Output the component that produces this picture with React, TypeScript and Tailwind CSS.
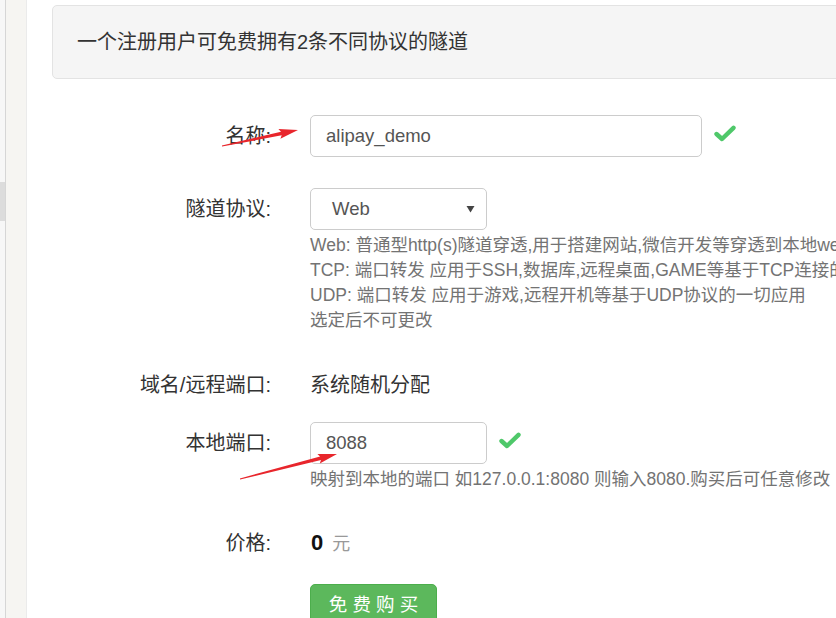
import React from "react";

function Arrow({ x1, y1, x2, y2 }: { x1: number; y1: number; x2: number; y2: number }) {
  const dx = x2 - x1;
  const dy = y2 - y1;
  const len = Math.sqrt(dx * dx + dy * dy);
  const ux = dx / len;
  const uy = dy / len;
  const nx = -uy;
  const ny = ux;
  const headLen = 17;
  const headW = 5;
  const bx = x2 - ux * headLen;
  const by = y2 - uy * headLen;
  const tailW = 0.6;
  const shaftW = 1.8;
  const pts = [
    [x1 + nx * tailW, y1 + ny * tailW],
    [bx + nx * shaftW, by + ny * shaftW],
    [bx + nx * headW - ux * 2, by + ny * headW - uy * 2],
    [x2, y2],
    [bx - nx * headW - ux * 2, by - ny * headW - uy * 2],
    [bx - nx * shaftW, by - ny * shaftW],
    [x1 - nx * tailW, y1 - ny * tailW],
  ]
    .map((p) => p.map((v) => v.toFixed(1)).join(","))
    .join(" ");
  return <polygon points={pts} fill="#e8262c" />;
}

function Check() {
  return (
    <svg width="22" height="17" viewBox="0 0 22 17" className="shrink-0">
      <path d="M2.5 9 L8 14 L19.5 2.8" fill="none" stroke="#4fc86a" strokeWidth="4.4" strokeLinecap="round" strokeLinejoin="round" />
    </svg>
  );
}

export default function App() {
  const font = "font-['Liberation_Sans','Noto_Sans_CJK_SC',sans-serif]";
  return (
    <div className={`relative w-[836px] h-[618px] overflow-hidden bg-white flex ${font}`}>
      {/* left strip */}
      <div className="w-[6px] h-full bg-[#f7f7f7] border-r border-[#d6d6d6] flex flex-col shrink-0">
        <div className="mt-[182px] h-[39px] bg-[#dcdcdc]" />
      </div>
      <div className="w-[21px] h-full bg-[#f6f5f2] border-r border-[#ebebeb] shrink-0" />
      {/* main */}
      <div className="flex-1 pl-[25px] pt-[5px] min-w-0">
        <div className="w-[900px] h-[74px] bg-[#f5f5f5] border border-[#e3e3e3] rounded-[5px] pl-[24px] flex items-center text-[20px] text-[#333] whitespace-nowrap">
          一个注册用户可免费拥有2条不同协议的隧道
        </div>

        {/* 名称 */}
        <div className="mt-[36px] flex items-center h-[42px]">
          <div className="w-[220px] text-right text-[20px] text-[#333] pr-[1px]">名称:</div>
          <div className="ml-[38px] w-[392px] h-[42px] border border-[#cccccc] rounded-[5px] flex items-center pl-[15px] text-[18.5px] text-[#555]">
            alipay_demo
          </div>
          <div className="ml-[12px] mt-[-6px]">
            <Check />
          </div>
        </div>

        {/* 隧道协议 */}
        <div className="mt-[31px] flex items-center h-[42px]">
          <div className="w-[220px] text-right text-[20px] text-[#333] pr-[1px]">隧道协议:</div>
          <div className="ml-[38px] w-[177px] h-[42px] border border-[#cccccc] rounded-[5px] flex items-center pl-[21px] pr-[11px] text-[18.5px] text-[#555] justify-between">
            <span>Web</span>
            <svg width="9" height="8" viewBox="0 0 9 8">
              <path d="M0.5 1 L8.5 1 L4.5 7.5 Z" fill="#444" />
            </svg>
          </div>
        </div>
        <div className="ml-[258px] mt-[3px] text-[17.5px] leading-[25px] text-[#737373] whitespace-nowrap">
          <div>Web: 普通型http(s)隧道穿透,用于搭建网站,微信开发等穿透到本地web</div>
          <div>TCP: 端口转发 应用于SSH,数据库,远程桌面,GAME等基于TCP连接的一切应用</div>
          <div>UDP: 端口转发 应用于游戏,远程开机等基于UDP协议的一切应用</div>
          <div>选定后不可更改</div>
        </div>

        {/* 域名/远程端口 */}
        <div className="mt-[39px] flex items-center h-[25px]">
          <div className="w-[220px] text-right text-[20px] text-[#333] pr-[1px] whitespace-nowrap">域名/远程端口:</div>
          <div className="ml-[38px] text-[20px] text-[#333]">系统随机分配</div>
        </div>

        {/* 本地端口 */}
        <div className="mt-[25px] flex items-center h-[42px]">
          <div className="w-[220px] text-right text-[20px] text-[#333] pr-[1px]">本地端口:</div>
          <div className="ml-[38px] w-[177px] h-[42px] border border-[#cccccc] rounded-[5px] flex items-center pl-[15px] text-[18.5px] text-[#555]">
            8088
          </div>
          <div className="ml-[12px] mt-[-6px]">
            <Check />
          </div>
        </div>
        <div className="ml-[258px] mt-[3px] text-[17.5px] leading-[25px] text-[#737373] whitespace-nowrap">
          映射到本地的端口 如127.0.0.1:8080 则输入8080.购买后可任意修改
        </div>

        {/* 价格 */}
        <div className="mt-[38px] flex items-center h-[25px]">
          <div className="w-[220px] text-right text-[20px] text-[#333] pr-[1px]">价格:</div>
          <div className="ml-[39px] flex items-baseline">
            <span className="text-[22px] font-bold text-[#111]">0</span>
            <span className="ml-[9px] text-[18px] text-[#999]">元</span>
          </div>
        </div>

        {/* button */}
        <div className="mt-[29px] ml-[258px]">
          <div className="w-[127px] h-[42px] bg-[#5cb85c] border border-[#4cae4c] rounded-[5px] flex items-center justify-center text-white text-[18.5px] whitespace-pre">
            免 费 购 买
          </div>
        </div>
      </div>

      {/* annotation arrows */}
      <svg className="absolute left-0 top-0 pointer-events-none" width="836" height="618">
        <Arrow x1={222} y1={146} x2={298} y2={130} />
        <Arrow x1={240} y1={479} x2={337} y2={454} />
      </svg>
    </div>
  );
}
